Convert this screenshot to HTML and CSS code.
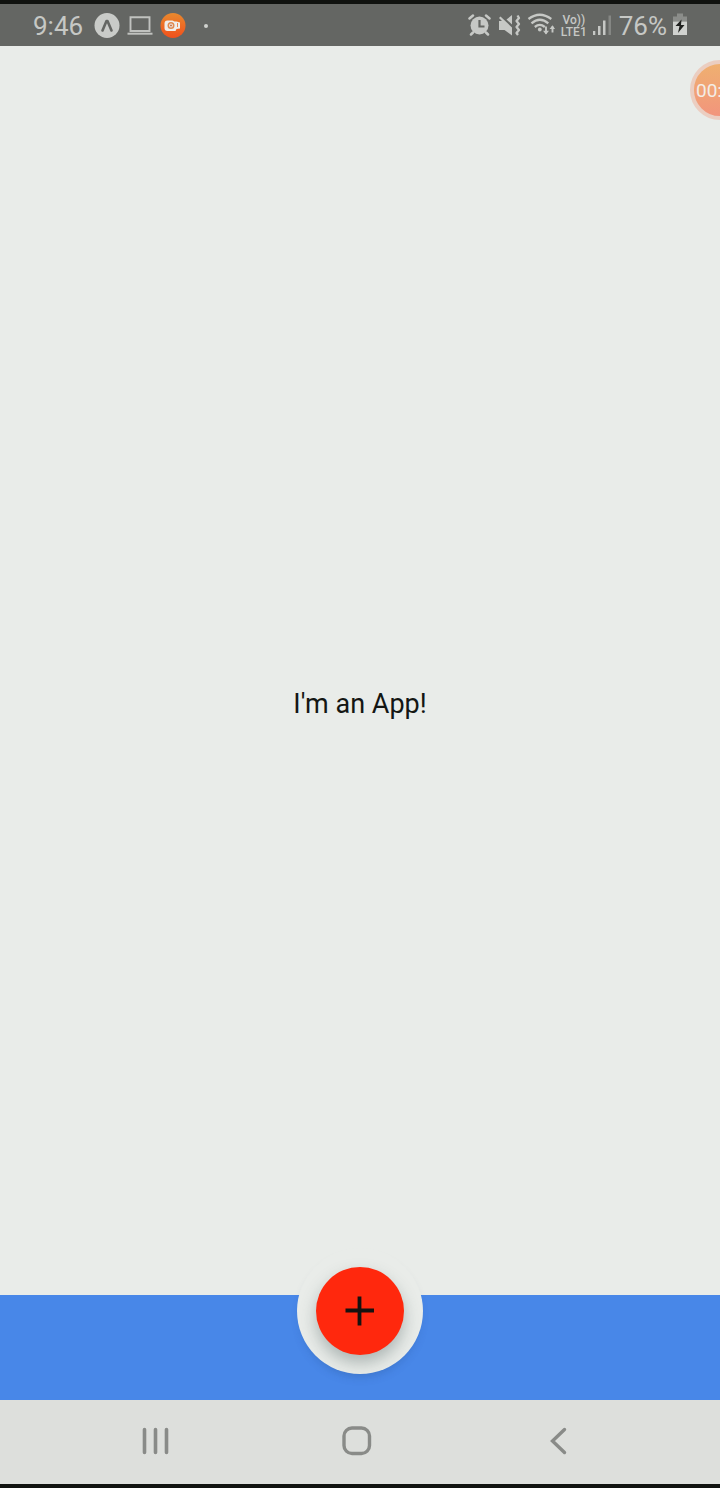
FILE: index.html
```html
<!DOCTYPE html>
<html lang="en">
<head>
<meta charset="utf-8">
<meta name="viewport" content="width=device-width, initial-scale=1">
<title>App</title>
<link rel="stylesheet" href="styles.css">
</head>
<body>
<div class="screen">
  <header class="status">
    <div class="status-group">
      <time class="clock">9:46</time>
      <svg class="app-icon" width="26" height="26" viewBox="0 0 26 26" aria-hidden="true">
        <circle cx="13" cy="12.500" r="12.500" fill="#c9cbc8"/>
        <path d="M8.500 17.500 12.500 8h1L17.500 17.500" fill="none" stroke="#646663" stroke-width="2.600" stroke-linejoin="round" stroke-linecap="round"/>
      </svg>
      <svg width="26" height="26" viewBox="0 0 26 26" aria-hidden="true">
        <path d="M3.500 4.200h19v13.800h-19z" fill="none" stroke="#c0c2bf" stroke-width="1.900"/>
        <path d="M.5 19.700h25v2h-25z" fill="#c0c2bf"/>
      </svg>
      <svg width="26" height="26" viewBox="0 0 26 26" aria-hidden="true">
        <defs><linearGradient id="rec" x1="0" y1="0" x2="0" y2="1"><stop offset="0" stop-color="#e8892e"/><stop offset="1" stop-color="#f1501c"/></linearGradient></defs>
        <circle cx="13" cy="12.500" r="12.500" fill="url(#rec)"/>
        <path d="M7.500 7.500h5l2 1h2l3.500 1v6l-3.500.5-1 2h-8q-3 0-3-3v-4.500q0-3 3-3z" fill="#f0eeea"/>
        <path d="M17.500 10v4" stroke="#ec8a50" stroke-width="1"/>
        <circle cx="11" cy="12.500" r="2.700" fill="#f0eeea" stroke="#e08a50" stroke-width="1.600"/>
        <circle cx="11" cy="12.500" r=".9" fill="#b9633a"/>
      </svg>
      <span class="more-dot"></span>
    </div>
    <div class="status-group status-right">
      <svg width="24" height="26" viewBox="0 0 24 26" aria-hidden="true">
        <g stroke="#c6c8c5" stroke-width="2.500" stroke-linecap="round" fill="none">
          <path d="M2.500 5.500 6 2.500M19 2.500l3.500 3M6 19.500l-2 2M19 19.500l2 2"/>
        </g>
        <circle cx="12.500" cy="12.500" r="9" fill="#c6c8c5"/>
        <path d="M12.500 7v6.500h5" fill="none" stroke="#646663" stroke-width="2.200"/>
      </svg>
      <svg width="24" height="26" viewBox="0 0 24 26" aria-hidden="true">
        <path d="M2 8h3l-3-3 1.500-1.500L15 14.500v8L7.500 17H2zM9.500 6.500 15 2v9.500z" fill="#c6c8c5"/>
        <path d="m20.500 2.500 1.500 2.500-2.500 3 2.500 3-2.500 3 2.500 3-2.500 3 1.500 2" fill="none" stroke="#c6c8c5" stroke-width="2.300" stroke-linejoin="round"/>
      </svg>
      <svg width="28" height="26" viewBox="0 0 28 26" aria-hidden="true">
        <g fill="none" stroke="#c6c8c5" stroke-width="2.300">
          <path d="M1.500 6q11.200-8.500 22.800 0M4.500 10.300q8.400-7 16.800 0M7.800 14q5-4.200 10 0"/>
          <path d="M19 13.500v7M25.500 19.500v-6" stroke-width="1.900"/>
        </g>
        <circle cx="12.800" cy="16.500" r="1.900" fill="#c6c8c5"/>
        <path d="m16 17.800 3 3.700 3-3.700zM22.500 16l3-3.700 2.500 3.700z" fill="#c6c8c5"/>
      </svg>
      <span class="carrier"><span>Vo))</span><span>LTE1</span></span>
      <svg width="20" height="26" viewBox="0 0 20 26" aria-hidden="true">
        <path d="M0 18h2.300v4h-2.300zM5 13h2.500v9h-2.500zM10 7.500h2.500v14.500h-2.500z" fill="#c6c8c5"/>
        <path d="M15.500 2.500h2.500v19.500h-2.500z" fill="#858784"/>
      </svg>
      <span class="percent">76%</span>
      <svg width="14" height="26" viewBox="0 0 14 26" aria-hidden="true">
        <path d="M4 .5h6v3h4v5H0v-5h4z" fill="#8b8d8a"/>
        <path d="M0 8.500h14v13.500H0z" fill="#d0d2cf"/>
        <path d="M8.500 6.500 2.500 13h4L5 20l6.500-8H8z" fill="#20221f"/>
      </svg>
    </div>
  </header>

  <main class="content"><p class="message">I'm an App!</p></main>

  <footer class="tabbar">
    <div class="notch">
      <button class="add" type="button" aria-label="Add">
        <svg width="30" height="30" viewBox="0 0 30 30" aria-hidden="true"><path d="M14.500.5v29M.5 14.500h28.500" stroke="#151210" stroke-width="3.800"/></svg>
      </button>
    </div>
  </footer>

  <nav class="system-nav" aria-label="System">
    <button type="button" aria-label="Recents">
      <svg width="30" height="30" viewBox="0 0 30 30"><path d="M4.500 3.500v23M15.500 3.500v23M26.500 3.500v23" stroke="#898b88" stroke-width="3.600" stroke-linecap="round"/></svg>
    </button>
    <button type="button" aria-label="Home">
      <svg width="30" height="30" viewBox="0 0 30 30"><rect x="2" y="2" width="25.500" height="25.500" rx="8" fill="none" stroke="#898b88" stroke-width="3.400"/></svg>
    </button>
    <button type="button" aria-label="Back">
      <svg width="30" height="30" viewBox="0 0 30 30"><path d="M20.500 3.500 8.500 15l12 11.500" fill="none" stroke="#898b88" stroke-width="3.400" stroke-linecap="round"/></svg>
    </button>
  </nav>

  <div class="recorder">00:</div>
</div>
</body>
</html>
```
FILE: styles.css
```css
* { box-sizing: border-box; }

body {
  margin: 0;
  font-family: Roboto, "Liberation Sans", sans-serif;
  color: #141613;
}

button {
  border: 0;
  padding: 0;
  background: none;
  cursor: pointer;
}

svg { display: block; flex: none; }

.screen {
  position: relative;
  display: flex;
  flex-direction: column;
  min-height: 100vh;
  overflow: hidden;
  background: #e9ece9;
  border-top: 4px solid #10120f;
  border-bottom: 4px solid #10120f;
}

.status {
  display: flex;
  justify-content: space-between;
  align-items: center;
  height: 42px;
  padding: 2px 33px 0;
  background: #646663;
  color: #c6c8c5;
}

.status-group {
  display: flex;
  align-items: center;
  gap: 7px;
}

.clock, .percent {
  font-size: 26px;
  line-height: 32px;
}

.app-icon { margin-left: 4px; }

.more-dot {
  width: 4px;
  height: 4px;
  margin-left: 11px;
  border-radius: 50%;
  background: #d0d2cf;
}

.status-right { gap: 6px; }

.carrier {
  display: flex;
  flex-direction: column;
  align-items: center;
  font-size: 12px;
  font-weight: 500;
  line-height: 12px;
}

.content {
  flex: 1;
  display: flex;
  align-items: center;
  justify-content: center;
  padding-top: 66px;
}

.message {
  margin: 0;
  font-size: 27px;
  line-height: 32px;
}

.tabbar {
  display: flex;
  justify-content: center;
  height: 105px;
  background: #4887e8;
}

.notch {
  display: grid;
  place-items: center;
  width: 126px;
  height: 126px;
  margin-top: -47px;
  border-radius: 50%;
  background: #e9ece9;
  box-shadow: 0 6px 12px -6px rgba(30, 60, 110, 0.3);
  clip-path: inset(0 -20px -20px -20px);
}

.add {
  display: grid;
  place-items: center;
  width: 88px;
  height: 88px;
  border-radius: 50%;
  background: #ff280d;
  box-shadow: 0 8px 16px rgba(60, 80, 80, 0.35);
}

.system-nav {
  display: flex;
  justify-content: space-between;
  align-items: center;
  height: 84px;
  padding: 0 146px 3px 140px;
  background: #dddfdc;
}

.recorder {
  position: absolute;
  top: 56px;
  right: -30px;
  width: 60px;
  height: 60px;
  padding-left: 2px;
  border: 4px solid #ebcec1;
  border-radius: 50%;
  background: linear-gradient(#efb070, #f2957c);
  color: #f3ede6;
  font-size: 19px;
  line-height: 54px;
}
```
